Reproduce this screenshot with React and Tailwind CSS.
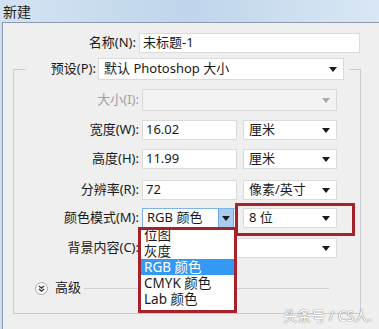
import React from "react";

const FONT = { fontFamily: '"Noto Sans", "Noto Sans CJK SC", sans-serif' };

const Arrow = ({ color = "#1a1a1a" }) => (
  <svg width="8" height="5" viewBox="0 0 8 5" className="shrink-0">
    <path d="M0 0H8L4 5Z" fill={color} />
  </svg>
);

const Field = ({ value, width }) => (
  <div
    className={`${width} h-[20px] bg-white border border-[#dadada] flex items-center pl-[3px] text-[13px] text-[#1a1a1a]`}
  >
    {value}
  </div>
);

const Select = ({ value, width, height = "h-[20px]", disabled }) => (
  <div
    className={`${width} ${height} border flex items-center justify-between pl-[5px] pr-[6px] text-[13px] ${
      disabled
        ? "bg-[#f3f3f3] border-[#d8d8d8] text-[#9a9a9a]"
        : "bg-white border-[#dadada] text-[#1a1a1a]"
    }`}
  >
    <span>{value}</span>
    <Arrow color={disabled ? "#a8a8a8" : "#1a1a1a"} />
  </div>
);

const Row = ({ label, disabled, className = "", children }) => (
  <div className={`flex items-center ${className}`}>
    <div
      className={`w-[128px] pr-[3px] text-right text-[13px] ${
        disabled ? "text-[#a0a0a0]" : "text-[#1a1a1a]"
      }`}
    >
      {label}
    </div>
    {children}
  </div>
);

export default function App() {
  return (
    <div
      className="relative w-[379px] h-[329px] overflow-hidden bg-[#cddff0] flex flex-col"
      style={FONT}
    >
      {/* title bar */}
      <div className="h-[22px] shrink-0 flex items-center pl-[3px] text-[14px] text-[#1e1e1e] bg-gradient-to-r from-[#d3e3f2] via-[#bfd5eb] to-[#d9e7f4]">
        新建
      </div>

      <div className="flex-1 ml-[2px] border-l border-t border-[#8d9cad] bg-[#efefef]">
        {/* name */}
        <div className="flex items-center mt-[10px]">
          <div className="w-[136px] pr-[3px] text-right text-[13px] text-[#1a1a1a]">
            名称(N):
          </div>
          <Field value="未标题-1" width="w-[221px]" />
        </div>

        <fieldset className="ml-[10px] mt-[5px] w-[348px] h-[256px] border border-[#c8cdd2] p-0">
          <legend className="ml-[12px] pr-[5px] p-0">
            <div className="flex items-center h-[22px]">
              <div className="w-[72px] pr-[2px] text-right text-[13px] text-[#1a1a1a]">
                预设(P):
              </div>
              <Select value="默认 Photoshop 大小" width="w-[246px]" height="h-[22px]" />
            </div>
          </legend>

          <Row label="大小(I):" disabled className="mt-[9px]">
            <Select value="" width="w-[195px]" height="h-[22px]" disabled />
          </Row>

          <Row label="宽度(W):" className="mt-[9px]">
            <Field value="16.02" width="w-[95px]" />
            <div className="ml-[6px]">
              <Select value="厘米" width="w-[94px]" />
            </div>
          </Row>

          <Row label="高度(H):" className="mt-[9px]">
            <Field value="11.99" width="w-[95px]" />
            <div className="ml-[6px]">
              <Select value="厘米" width="w-[94px]" />
            </div>
          </Row>

          <Row label="分辨率(R):" className="mt-[11px]">
            <Field value="72" width="w-[95px]" />
            <div className="ml-[6px]">
              <Select value="像素/英寸" width="w-[94px]" />
            </div>
          </Row>

          <Row label="颜色模式(M):" className="mt-[8px]">
            <div className="w-[95px] h-[20px] bg-white border border-[#7eb4ea] flex items-center text-[13px] text-[#1a1a1a]">
              <span className="flex-1 pl-[4px]">RGB 颜色</span>
              <div className="w-[16px] h-full mr-[2px] bg-[#a8cdee] border-x border-[#6fa6dc] flex items-center justify-center">
                <Arrow />
              </div>
            </div>
            <div className="ml-[6px]">
              <Select value="8 位" width="w-[94px]" />
            </div>
          </Row>

          <Row label="背景内容(C):" className="mt-[10px]">
            <Select value="" width="w-[195px]" />
          </Row>

          {/* advanced */}
          <div className="flex items-center mt-[22px] h-[16px]">
            <svg width="13" height="13" viewBox="0 0 13 13" className="ml-[21px] shrink-0">
              <circle cx="6.5" cy="6.5" r="6" fill="#fafafa" stroke="#a9a9a9" />
              <path d="M4 4L6.5 6.2L9 4M4 7L6.5 9.2L9 7" fill="none" stroke="#333" strokeWidth="1.3" />
            </svg>
            <span className="ml-[7px] text-[13px] text-[#1a1a1a]">高级</span>
            <div className="flex-1 ml-[3px] mr-[31px] h-px bg-[#cfcfcf]" />
          </div>
        </fieldset>
      </div>

      {/* highlight around bit depth */}
      <div className="absolute left-[235px] top-[203px] w-[120px] h-[33px] border-[3px] border-[#a5222a]" />

      {/* open colour-mode list */}
      <div className="absolute left-[138px] top-[227px] w-[99px] h-[86px] border-[3px] border-[#a5222a] bg-white overflow-hidden">
        <div className="-mt-[3px] text-[13.5px] text-[#1a1a1a]">
          <div className="h-[16px] leading-[16px] pl-[3px]">位图</div>
          <div className="h-[16px] leading-[16px] pl-[3px]">灰度</div>
          <div className="h-[16px] leading-[16px] pl-[3px] bg-[#3399f3] text-white">RGB 颜色</div>
          <div className="h-[16px] leading-[16px] pl-[3px]">CMYK 颜色</div>
          <div className="h-[16px] leading-[16px] pl-[3px]">Lab 颜色</div>
        </div>
      </div>

      {/* watermark */}
      <div className="absolute right-[7px] bottom-[3px] text-[14px] text-white [text-shadow:0_0_1px_#7a7a7a,0_0_1px_#7a7a7a]">
        头条号 / CS人.
      </div>
    </div>
  );
}
